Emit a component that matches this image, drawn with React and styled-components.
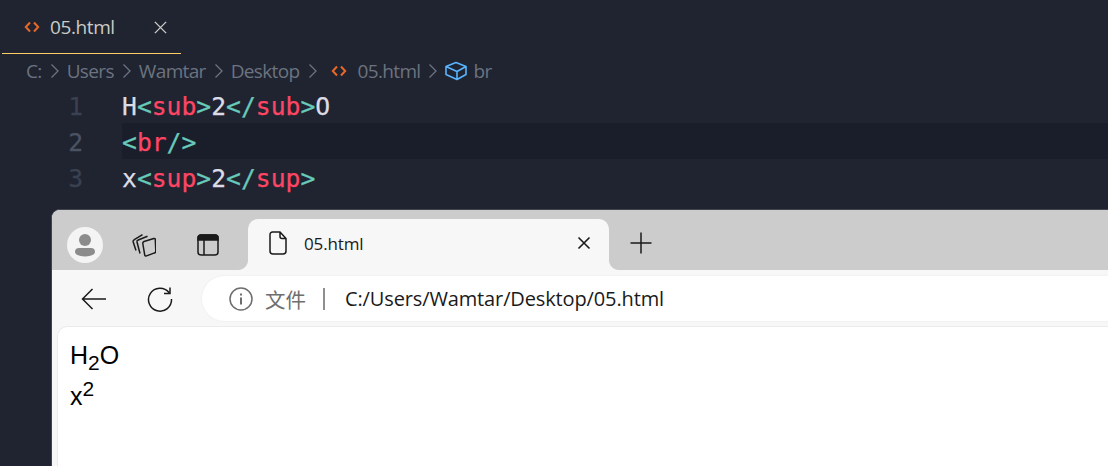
import styled, { createGlobalStyle } from "styled-components";

const Global = createGlobalStyle`
  html, body {
    margin: 0;
    height: 100%;
    overflow: hidden;
    background: #1f2430;
  }
  * { box-sizing: border-box; }
`;

const Page = styled.div`
  width: 1108px;
  height: 466px;
  overflow: hidden;
  background: #1f2430;
  font-family: "Open Sans", "Noto Sans CJK SC", sans-serif;
`;

const TabBar = styled.div`
  height: 54px;
  padding-left: 2px;
`;

const EditorTab = styled.div`
  width: 179px;
  height: 54px;
  display: flex;
  align-items: center;
  padding: 1px 0 0 22px;
  border-bottom: 1px solid #ffcc66;
  color: #cbccc6;
  font-size: 19px;
  letter-spacing: -0.4px;
`;

const TabName = styled.span`
  margin-left: 10px;
  width: 103px;
`;

const Breadcrumbs = styled.div`
  height: 33px;
  display: flex;
  align-items: center;
  padding-left: 26px;
  color: #6c7380;
  font-size: 19px;
  letter-spacing: -0.65px;
`;

const Crumb = styled.span`
  display: flex;
  margin-left: ${(p) => p.$gap || 0}px;
`;

const Code = styled.div`
  height: 122px;
  font-family: "DejaVu Sans Mono", monospace;
  font-size: 24.7px;
  -webkit-text-stroke: 0.25px;
`;

const Line = styled.div`
  height: 36px;
  line-height: 33px;
  display: flex;
  white-space: pre;
`;

const LineNo = styled.span`
  width: 122px;
  padding: 3px 39px 0 0;
  text-align: right;
  color: ${(p) => (p.$active ? "#4b5362" : "#3a4150")};
`;

const LineBody = styled.span`
  flex: 1;
  padding-top: 3px;
  color: #dcdce6;
  background: ${(p) => (p.$active ? "#191e2a" : "transparent")};
`;

const Punct = styled.span`
  color: #68cabb;
`;

const Tag = styled.span`
  color: #ff4564;
`;

const Browser = styled.div`
  margin-left: 51px;
  height: 300px;
  border: 1px solid #3f444e;
  border-right: none;
  border-bottom: none;
  border-top-left-radius: 9px;
  background: #f7f7f7;
  overflow: hidden;
`;

const BrowserTabs = styled.div`
  height: 60px;
  display: flex;
  align-items: flex-end;
  background: #cccccc;
  padding-left: 15px;
`;

const Avatar = styled.div`
  width: 36px;
  height: 36px;
  margin-bottom: 7px;
  border-radius: 50%;
  background: #f4f4f4;
  display: flex;
  align-items: center;
  justify-content: center;
`;

const TabTool = styled.div`
  width: 24px;
  height: 24px;
  margin: 0 0 13px ${(p) => p.$gap}px;
  display: flex;
  align-items: center;
  justify-content: center;
`;

const BrowserTab = styled.div`
  position: relative;
  width: 361px;
  height: 51px;
  margin-left: 28px;
  padding: 0 18px 3px 21px;
  display: flex;
  align-items: center;
  background: #f7f7f7;
  border-radius: 10px 10px 0 0;
  color: #1a1a1a;
  font-size: 17px;
  letter-spacing: -0.15px;

  &::before,
  &::after {
    content: "";
    position: absolute;
    bottom: 0;
    width: 10px;
    height: 10px;
  }
  &::before {
    left: -10px;
    background: radial-gradient(circle at 0 0, #cccccc 9.5px, #f7f7f7 10.5px);
  }
  &::after {
    right: -10px;
    background: radial-gradient(circle at 100% 0, #cccccc 9.5px, #f7f7f7 10.5px);
  }
`;

const BrowserTabName = styled.span`
  flex: 1;
  margin-left: 17px;
`;

const NewTab = styled.div`
  margin: 0 0 15px 20px;
  width: 24px;
  height: 24px;
  display: flex;
  align-items: center;
  justify-content: center;
`;

const Toolbar = styled.div`
  height: 56px;
  padding: 6px 0 5px 29px;
  display: flex;
  align-items: stretch;
`;

const NavButton = styled.div`
  width: 26px;
  margin-right: ${(p) => p.$gap}px;
  display: flex;
  align-items: center;
  justify-content: center;
`;

const Omnibox = styled.div`
  flex: 1;
  margin-right: -40px;
  padding-left: 27px;
  display: flex;
  align-items: center;
  background: #ffffff;
  border-radius: 23px 0 0 23px;
  box-shadow: 0 0 3px rgba(0, 0, 0, 0.05);
  font-size: 20px;
  letter-spacing: -0.13px;
  color: #1a1a1a;
`;

const Secure = styled.span`
  margin-left: 12px;
  color: #6e6e6e;
  font-size: 20.5px;
  letter-spacing: 0;
`;

const Divider = styled.span`
  width: 2px;
  height: 22px;
  margin: 0 20px 0 17px;
  background: #8f8f8f;
`;

const Viewport = styled.div`
  height: 200px;
  margin-left: 5px;
  padding: 8px 12px;
  background: #ffffff;
  border-top: 1px solid #ebebeb;
  border-left: 1px solid #ebebeb;
  border-top-left-radius: 10px;
  font-family: "Liberation Sans", Arial, sans-serif;
  font-size: 25px;
  line-height: 41px;
  color: #000000;

  sub, sup {
    font-size: 21px;
    line-height: 0;
  }
`;

const HtmlIcon = ({ color = "#e8682a" }) => (
  <svg width="16" height="14" viewBox="0 0 16 14" fill="none" stroke={color} strokeWidth="2">
    <path d="M6 2.500 1.800 7 6 11.500M10 2.500 14.200 7 10 11.500" />
  </svg>
);

const Chevron = () => (
  <svg width="10" height="16" viewBox="0 0 10 16" fill="none" stroke="#6c7380" strokeWidth="1.300">
    <path d="M1.500 1.500 8 8l-6.500 6.500" />
  </svg>
);

const Sep = ({ gap }) => (
  <Crumb $gap={gap}>
    <Chevron />
  </Crumb>
);

const BoxIcon = () => (
  <svg width="24" height="20" viewBox="0 0 24 20" fill="none" stroke="#59b4ff" strokeWidth="1.600" strokeLinejoin="round">
    <path d="M12 1.500 22 5.500v8L13 18.500 2 13.500v-8zM2 5.500l11 5 9-5M13 10.500v8" />
  </svg>
);

const Open = ({ name, close }) => (
  <>
    <Punct>{close ? "</" : "<"}</Punct>
    <Tag>{name}</Tag>
    <Punct>&gt;</Punct>
  </>
);

export default function App() {
  return (
    <Page>
      <Global />
      <TabBar>
        <EditorTab>
          <HtmlIcon />
          <TabName>05.html</TabName>
          <svg width="15" height="15" viewBox="0 0 16 16" fill="none" stroke="#cbccc6" strokeWidth="1.500">
            <path d="M2 2l12 12M14 2 2 14" />
          </svg>
        </EditorTab>
      </TabBar>
      <Breadcrumbs>
        <span>C:</span>
        <Sep gap={8} />
        <Crumb $gap={7}>Users</Crumb>
        <Sep gap={8} />
        <Crumb $gap={7}>Wamtar</Crumb>
        <Sep gap={8} />
        <Crumb $gap={7}>Desktop</Crumb>
        <Sep gap={8} />
        <Crumb $gap={13}><HtmlIcon /></Crumb>
        <Crumb $gap={11}>05.html</Crumb>
        <Sep gap={8} />
        <Crumb $gap={6}><BoxIcon /></Crumb>
        <Crumb $gap={5}>br</Crumb>
      </Breadcrumbs>
      <Code>
        <Line>
          <LineNo>1</LineNo>
          <LineBody>
            H<Open name="sub" />2<Open name="sub" close />O
          </LineBody>
        </Line>
        <Line>
          <LineNo $active>2</LineNo>
          <LineBody $active>
            <Punct>&lt;</Punct>
            <Tag>br</Tag>
            <Punct>/&gt;</Punct>
          </LineBody>
        </Line>
        <Line>
          <LineNo>3</LineNo>
          <LineBody>
            x<Open name="sup" />2<Open name="sup" close />
          </LineBody>
        </Line>
      </Code>
      <Browser>
        <BrowserTabs>
          <Avatar>
            <svg width="22" height="24" viewBox="0 0 22 24" fill="#8c8c8c">
              <circle cx="11" cy="7" r="6" />
              <path d="M5 15h12a4 4 0 0 1 4 4c0 3-5 4.500-10 4.500S1 22 1 19a4 4 0 0 1 4-4z" />
            </svg>
          </Avatar>
          <TabTool $gap={29}>
            <svg width="24" height="24" viewBox="0 0 24 24" fill="none" stroke="#1a1a1a" strokeWidth="1.500" strokeLinejoin="round">
              <path d="M12 8.500 21.800 5.500Q23.300 5.200 23.300 6.700L23.800 18.300Q23.800 19.600 22.500 19.900L14.500 22.900Q13 23.300 12.700 21.800L10.800 10.500Q10.600 9 12 8.500z" />
              <path d="M8 20.500 5 9Q4.700 7.500 6.200 7L15.500 3.200" />
              <path d="M4 17.500 1.200 9Q0.800 7.300 2.300 6.700L10.500 1.700" />
            </svg>
          </TabTool>
          <TabTool $gap={40}>
            <svg width="22" height="22" viewBox="0 0 22 22" fill="none" stroke="#1a1a1a" strokeWidth="1.500">
              <rect x="1" y="1" width="20" height="20" rx="3" />
              <path d="M7 5.500V21" />
              <path d="M1 4a3 3 0 0 1 3-3h14a3 3 0 0 1 3 3v2H1z" fill="#1a1a1a" />
            </svg>
          </TabTool>
          <BrowserTab>
            <svg width="18" height="24" viewBox="0 0 18 24" fill="none" stroke="#1a1a1a" strokeWidth="1.500" strokeLinejoin="round">
              <path d="M3.500 1H11l6 6.500V20a3 3 0 0 1-3 3H4a3 3 0 0 1-3-3V3.500A2.500 2.500 0 0 1 3.500 1zM11 1v4.500a2 2 0 0 0 2 2h4" />
            </svg>
            <BrowserTabName>05.html</BrowserTabName>
            <svg width="14" height="14" viewBox="0 0 14 14" fill="none" stroke="#1a1a1a" strokeWidth="1.600">
              <path d="M1.500 1.500l11 11M12.500 1.500l-11 11" />
            </svg>
          </BrowserTab>
          <NewTab>
            <svg width="22" height="22" viewBox="0 0 22 22" fill="none" stroke="#1a1a1a" strokeWidth="1.500">
              <path d="M11 0.500v21M0.500 11h21" />
            </svg>
          </NewTab>
        </BrowserTabs>
        <Toolbar>
          <NavButton $gap={40}>
            <svg width="26" height="22" viewBox="0 0 26 22" fill="none" stroke="#1a1a1a" strokeWidth="1.500">
              <path d="M25 11H2M11.500 1 1.500 11l10 10" />
            </svg>
          </NavButton>
          <NavButton $gap={29}>
            <svg width="26" height="26" viewBox="0 0 26 26" fill="none" stroke="#1a1a1a" strokeWidth="1.500">
              <path d="M22 6.500A11.500 11.500 0 1 0 24.500 13M23 1.500v6h-6" />
            </svg>
          </NavButton>
          <Omnibox>
            <svg width="24" height="24" viewBox="0 0 24 24" fill="none" stroke="#6e6e6e" strokeWidth="1.500">
              <circle cx="12" cy="12" r="11" />
              <path d="M12 10.500v7" strokeWidth="2" />
              <path d="M12 6.500v2" strokeWidth="2" />
            </svg>
            <Secure>文件</Secure>
            <Divider />
            <span>C:/Users/Wamtar/Desktop/05.html</span>
          </Omnibox>
        </Toolbar>
        <Viewport>
          <div>H<sub>2</sub>O</div>
          <div>x<sup>2</sup></div>
        </Viewport>
      </Browser>
    </Page>
  );
}
